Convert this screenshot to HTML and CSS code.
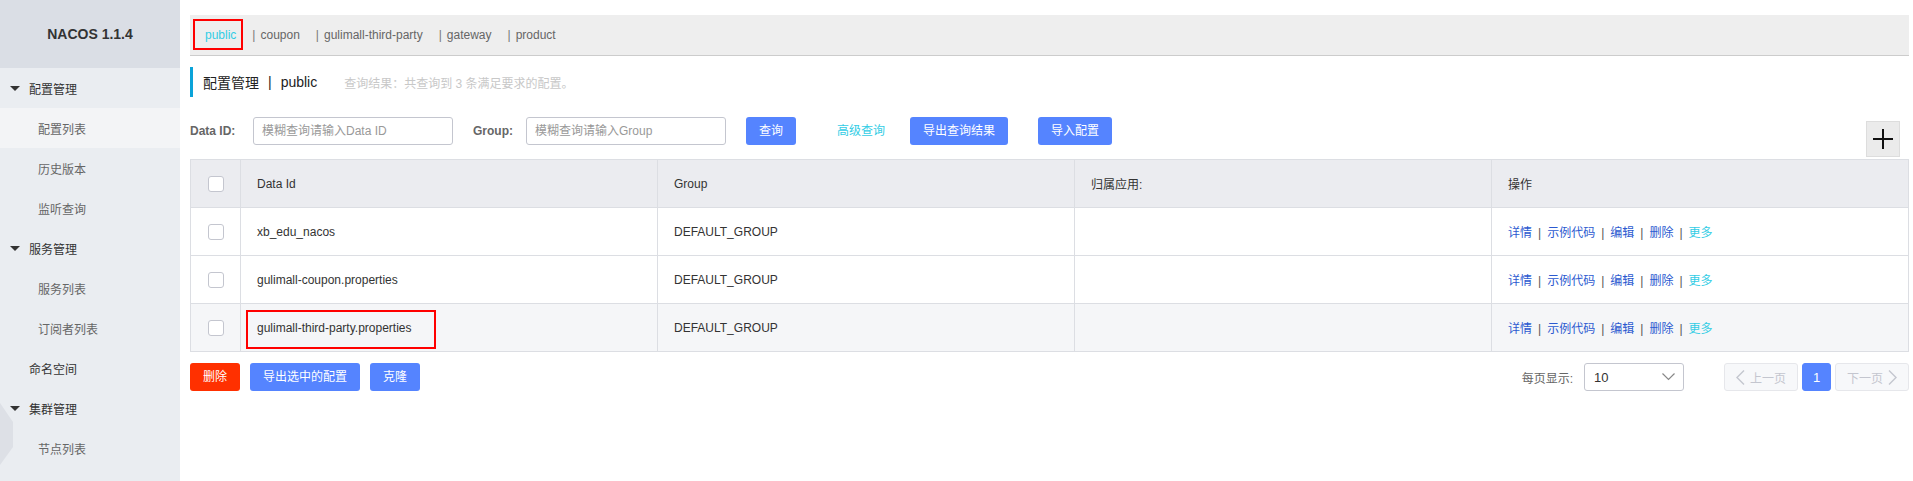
FILE: index.html
```html
<!DOCTYPE html>
<html lang="zh-CN">
<head>
<meta charset="utf-8">
<title>Nacos</title>
<link rel="stylesheet" href="styles.css">
</head>
<body>
<div class="app">
  <aside class="sidebar">
    <div class="brand">NACOS 1.1.4</div>
    <ul class="menu">
      <li class="group"><span class="caret"></span>配置管理</li>
      <li class="item active">配置列表</li>
      <li class="item">历史版本</li>
      <li class="item">监听查询</li>
      <li class="group"><span class="caret"></span>服务管理</li>
      <li class="item">服务列表</li>
      <li class="item">订阅者列表</li>
      <li class="group plain">命名空间</li>
      <li class="group"><span class="caret"></span>集群管理</li>
      <li class="item">节点列表</li>
    </ul>
    <svg class="hex" width="14" height="62" viewBox="0 0 14 62"><polygon points="0,0 13,19 13,44 0,62" fill="#dde0e6"/></svg>
  </aside>

  <main class="main">
    <div class="tabs">
      <span class="tab current"><span class="mark"></span>public</span>
      <span class="tab-sep">|</span><span class="tab">coupon</span>
      <span class="tab-sep">|</span><span class="tab">gulimall-third-party</span>
      <span class="tab-sep">|</span><span class="tab">gateway</span>
      <span class="tab-sep">|</span><span class="tab">product</span>
    </div>

    <div class="title">
      <span>配置管理</span><span class="title-sep">|</span><span>public</span>
      <span class="result">查询结果：共查询到 3 条满足要求的配置。</span>
    </div>

    <div class="search">
      <span class="lbl lbl-id">Data ID:</span>
      <div class="input">模糊查询请输入Data ID</div>
      <span class="lbl lbl-grp">Group:</span>
      <div class="input">模糊查询请输入Group</div>
      <span class="btn btn-query">查询</span>
      <span class="link-adv">高级查询</span>
      <span class="btn btn-export">导出查询结果</span>
      <span class="btn">导入配置</span>
      <span class="plus"><svg width="20" height="20" viewBox="0 0 20 20"><path d="M10 0V20M0 10H20" stroke="#111" stroke-width="2"/></svg></span>
    </div>

    <table class="grid">
      <colgroup><col class="c-check"><col><col><col><col></colgroup>
      <thead>
        <tr><th class="chk"><span class="cb"></span></th><th>Data Id</th><th>Group</th><th>归属应用:</th><th>操作</th></tr>
      </thead>
      <tbody>
        <tr>
          <td class="chk"><span class="cb"></span></td><td>xb_edu_nacos</td><td>DEFAULT_GROUP</td><td></td>
          <td><span class="op">详情</span><span class="bar">|</span><span class="op">示例代码</span><span class="bar">|</span><span class="op">编辑</span><span class="bar">|</span><span class="op">删除</span><span class="bar">|</span><span class="op more">更多</span></td>
        </tr>
        <tr>
          <td class="chk"><span class="cb"></span></td><td>gulimall-coupon.properties</td><td>DEFAULT_GROUP</td><td></td>
          <td><span class="op">详情</span><span class="bar">|</span><span class="op">示例代码</span><span class="bar">|</span><span class="op">编辑</span><span class="bar">|</span><span class="op">删除</span><span class="bar">|</span><span class="op more">更多</span></td>
        </tr>
        <tr class="hover">
          <td class="chk"><span class="cb"></span></td><td><span class="boxed">gulimall-third-party.properties</span></td><td>DEFAULT_GROUP</td><td></td>
          <td><span class="op">详情</span><span class="bar">|</span><span class="op">示例代码</span><span class="bar">|</span><span class="op">编辑</span><span class="bar">|</span><span class="op">删除</span><span class="bar">|</span><span class="op more">更多</span></td>
        </tr>
      </tbody>
    </table>

    <div class="footer">
      <span class="btn btn-danger">删除</span>
      <span class="btn">导出选中的配置</span>
      <span class="btn">克隆</span>
      <div class="pager">
        <span class="pp-label">每页显示:</span>
        <div class="select"><span>10</span><svg width="13" height="8" viewBox="0 0 13 8"><polyline points="0.5,0.5 6.5,6.5 12.5,0.5" fill="none" stroke="#888" stroke-width="1.2"/></svg></div>
        <div class="pg pg-prev"><svg width="9" height="15" viewBox="0 0 9 15"><polyline points="8,0.5 1,7.5 8,14.5" fill="none" stroke="#c4c6cf" stroke-width="1.4"/></svg><span>上一页</span></div>
        <div class="pg pg-cur">1</div>
        <div class="pg pg-next"><span>下一页</span><svg width="9" height="15" viewBox="0 0 9 15"><polyline points="1,0.5 8,7.5 1,14.5" fill="none" stroke="#c4c6cf" stroke-width="1.4"/></svg></div>
      </div>
    </div>
  </main>
</div>
</body>
</html>
```

FILE: styles.css
```css
* { box-sizing: border-box; }
html, body { margin: 0; padding: 0; }
body {
  width: 1913px;
  height: 481px;
  overflow: hidden;
  background: #fff;
  font-family: "Liberation Sans", "Noto Sans CJK SC", sans-serif;
  font-size: 12px;
  color: #333;
}
.app { display: flex; height: 481px; }

/* sidebar */
.sidebar { width: 180px; flex: none; background: #eaedf1; position: relative; }
.brand {
  height: 68px;
  background: #dadee5;
  display: flex; align-items: center; justify-content: center;
  font-weight: bold; font-size: 14px; color: #333;
}
.menu { list-style: none; margin: 0; padding: 0; }
.menu li { height: 40px; display: flex; align-items: center; font-size: 12px; }
.group { padding-left: 10px; color: #333; }
.group.plain { padding-left: 29px; }
.caret {
  width: 0; height: 0;
  border-left: 5px solid transparent;
  border-right: 5px solid transparent;
  border-top: 5px solid #333;
  margin-right: 9px;
}
.item { padding-left: 38px; color: #666; }
.item.active { background: #f3f4f6; }
.hex { position: absolute; left: 0; top: 403px; }

/* main */
.main { flex: 1; min-width: 0; padding: 15px 4px 0 10px; }
.tabs {
  height: 41px;
  background: #eee;
  border-bottom: 1px solid #ccc;
  display: flex; align-items: center;
  padding-left: 15px;
  color: #666;
  line-height: 14px;
}
.tab { position: relative; }
.tab.current { color: #33cde5; }
.mark {
  position: absolute;
  left: -12px; right: -7px; top: -9px; bottom: -8px;
  border: 2px solid #f00;
}
.tab-sep { margin: 0 5px 0 16px; color: #777; }

.title {
  margin-top: 11px;
  height: 30px;
  border-left: 3px solid #0aa3d9;
  padding-left: 10px;
  display: flex; align-items: center;
  font-size: 14px; color: #222;
}
.title-sep { margin: 0 9px 0 9px; }
.result { font-size: 12px; color: #c8c8c8; margin-left: 27px; }

.search { margin-top: 20px; display: flex; align-items: flex-start; }
.lbl { height: 28px; line-height: 28px; font-weight: bold; color: #666; }
.lbl-id { width: 63px; }
.lbl-grp { width: 53px; }
.input {
  width: 200px; height: 28px;
  border: 1px solid #c4c6cf; border-radius: 3px;
  padding-left: 8px; line-height: 26px;
  color: #999;
  margin-right: 20px;
}
.btn {
  height: 28px; line-height: 28px;
  padding: 0 13px;
  border-radius: 3px;
  background: #5584ff; color: #fff;
  white-space: nowrap;
}
.btn-query { margin-right: 41px; }
.link-adv { height: 28px; line-height: 28px; color: #33cde5; margin-right: 25px; }
.btn-export { margin-right: 30px; }
.btn-danger { background: #ff3000; }
.plus {
  margin-left: auto; margin-top: 4px; margin-right: 9px;
  width: 34px; height: 36px;
  background: #ebebeb; border: 1px solid #ddd;
  display: flex; align-items: center; justify-content: center;
}

/* table */
.grid { width: 100%; border-collapse: collapse; table-layout: fixed; margin-top: 2px; }
.grid col.c-check { width: 50px; }
.grid th, .grid td {
  border: 1px solid #dcdee3;
  height: 48px;
  padding: 0 16px;
  text-align: left; font-weight: normal; color: #333;
  white-space: nowrap;
}
.grid thead th { background: #ebecf0; }
.grid .chk { padding: 0; text-align: center; }
.cb {
  display: inline-block; vertical-align: middle;
  width: 16px; height: 16px;
  border: 1px solid #c4c6cf; border-radius: 3px; background: #fff;
}
.grid tr.hover td { background: #f5f6f8; }
.boxed { position: relative; }
.boxed::after {
  content: "";
  position: absolute;
  left: -11px; right: -24px; top: -11px; bottom: -14px;
  border: 2px solid #f00;
}
.op { color: #2c5ad0; }
.op.more { color: #33cde5; }
.bar { margin: 0 6px; color: #555; }

/* footer */
.footer { margin-top: 11px; display: flex; align-items: center; gap: 10px; }
.pager { margin-left: auto; display: flex; align-items: center; }
.pp-label { color: #666; margin-right: 11px; }
.select {
  width: 100px; height: 28px;
  border: 1px solid #c4c6cf; border-radius: 3px;
  display: flex; align-items: center; justify-content: space-between;
  padding: 0 8px 0 9px;
  color: #333; font-size: 13px;
  margin-right: 40px;
}
.pg {
  height: 28px;
  border: 1px solid #e6e7eb; border-radius: 3px;
  background: #f7f8fa; color: #c4c6cf;
  display: flex; align-items: center; justify-content: center; gap: 5px;
}
.pg-prev, .pg-next { width: 74px; }
.pg-cur { width: 29px; margin: 0 4px; background: #5584ff; border-color: #5584ff; color: #fff; font-size: 13px; }
```
